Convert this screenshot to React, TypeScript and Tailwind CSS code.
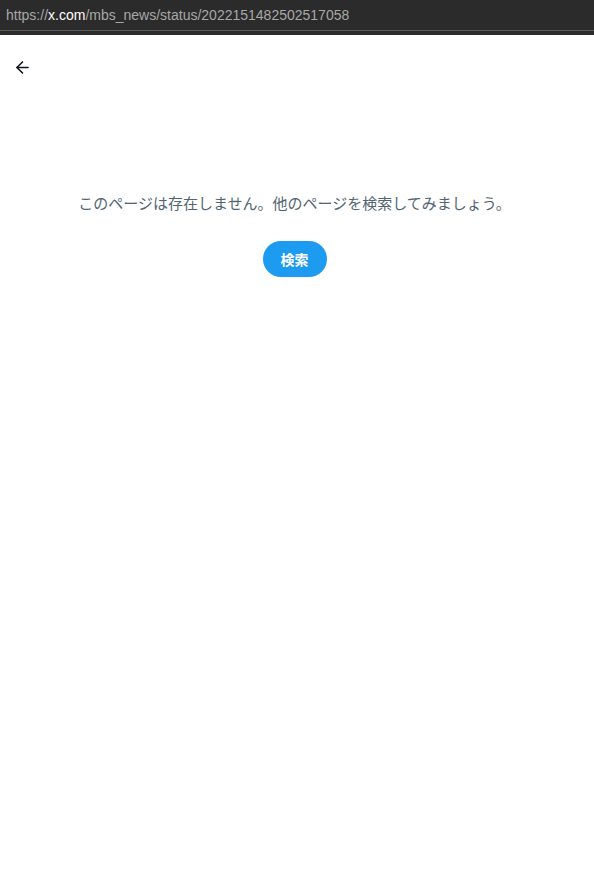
import { ArrowLeft } from "lucide-react";

export default function App() {
  return (
    <div className="min-h-screen bg-white font-['Noto_Sans','Noto_Sans_CJK_JP',sans-serif]">
      {/* address bar */}
      <div className="bg-[#2b2b2b]">
        <div className="h-[30px] px-[6px] flex items-center text-[14px] text-[#a8a8a8] font-['Liberation_Sans','Noto_Sans',sans-serif]">
          <span>https://</span>
          <span className="text-white">x.com</span>
          <span>/mbs_news/status/2022151482502517058</span>
        </div>
        <div className="h-px bg-[#5c5c5c]" />
        <div className="h-[4px]" />
      </div>

      <div className="h-[64px] px-[13px] flex items-center">
        <ArrowLeft className="w-[19px] h-[19px] text-[#0f1419]" strokeWidth={2} />
      </div>

      <div className="flex flex-col items-center pt-[94px] pr-[5px]">
        <p className="text-[15px] text-[#536471] leading-[20px]">
          このページは存在しません。他のページを検索してみましょう。
        </p>
        <button className="mt-[28px] h-[36px] w-[64px] rounded-full bg-[#1d9bf0] text-white text-[14px] font-bold">
          検索
        </button>
      </div>
    </div>
  );
}
